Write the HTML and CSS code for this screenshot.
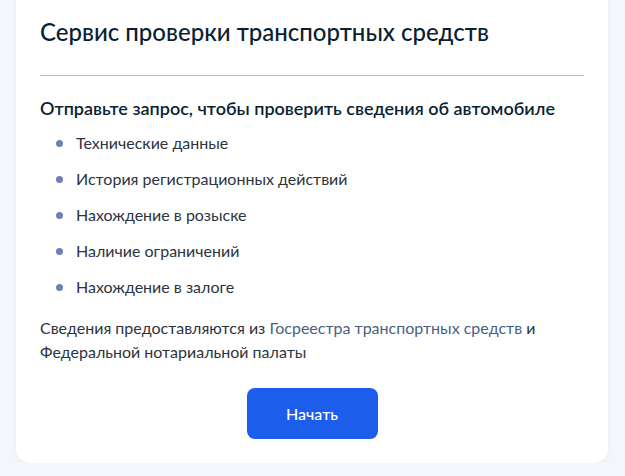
FILE: index.html
```html
<!DOCTYPE html>
<html lang="ru">
<head>
  <meta charset="UTF-8">
  <meta name="viewport" content="width=device-width, initial-scale=1.0">
  <title>Сервис проверки транспортных средств</title>
  <link rel="stylesheet" href="styles.css">
</head>
<body>
  <div class="card">
    <h1 class="card-title">Сервис проверки транспортных средств</h1>
    <hr class="divider">

    <h2 class="subtitle">Отправьте запрос, чтобы проверить сведения об автомобиле</h2>
    <ul class="checks">
      <li>Технические данные</li>
      <li>История регистрационных действий</li>
      <li>Нахождение в розыске</li>
      <li>Наличие ограничений</li>
      <li>Нахождение в залоге</li>
    </ul>

    <p class="source">Сведения предоставляются из <a href="#">Госреестра транспортных средств</a> и Федеральной нотариальной палаты</p>

    <div class="actions">
      <button class="btn-primary" type="button">Начать</button>
    </div>
  </div>
</body>
</html>
```

FILE: styles.css
```css
body {
  font-family: Lato, "Noto Sans", sans-serif;
  margin: 0;
  padding: 0 16px;
  background-color: #f3f6fa;
  color: #1f2633;
}

.card {
  max-width: 592px;
  box-sizing: border-box;
  margin-top: -20px;
  padding: 36px 24px 24px;
  background: #fff;
  border-radius: 0 0 14px 14px;
  box-shadow: 0 1px 6px rgba(100, 120, 150, 0.08);
}

.card-title {
  margin: 0;
  font-size: 24px;
  line-height: 32px;
  font-weight: 500;
  color: #0b1f33;
}

.divider {
  margin: 27px 0 20px;
  border: 0;
  border-top: 1px solid #b3bfcc;
}

.subtitle {
  margin: 0;
  font-size: 18px;
  line-height: 24px;
  font-weight: 600;
  color: #0b1f33;
}

.checks {
  list-style: none;
  margin: 11px 0 0;
  padding: 0 0 0 16px;
  display: flex;
  flex-direction: column;
  gap: 12px;
}

.checks li {
  display: flex;
  align-items: center;
  gap: 13px;
  font-size: 16px;
  line-height: 24px;
  color: #2d3440;
}

.checks li::before {
  content: "";
  width: 7px;
  height: 7px;
  border-radius: 50%;
  background: #6c80b5;
  flex-shrink: 0;
}

.source {
  margin: 17px 0 0;
  font-size: 16px;
  line-height: 24px;
  color: #2d3440;
}

.source a {
  color: #4a5f80;
  text-decoration: none;
}

.actions {
  display: flex;
  justify-content: center;
  margin-top: 24px;
}

.btn-primary {
  width: 131px;
  height: 51px;
  border: 0;
  border-radius: 8px;
  background: #1d5deb;
  color: #fff;
  font-family: inherit;
  font-size: 16px;
  font-weight: 500;
  cursor: pointer;
}
```
